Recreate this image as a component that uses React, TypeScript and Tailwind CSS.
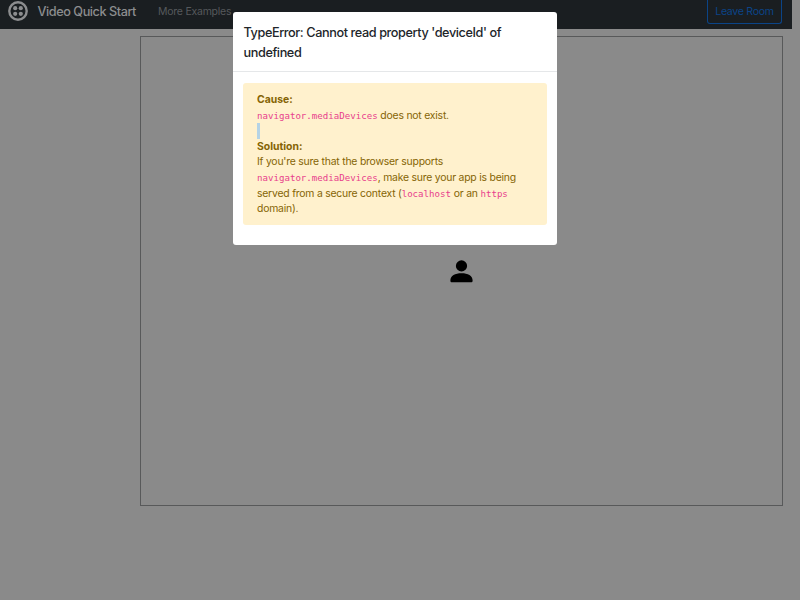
import type { ReactNode } from "react";

function Code({ children }: { children: ReactNode }) {
  return (
    <code className="font-['DejaVu_Sans_Mono',monospace] text-[9.12px] leading-none tracking-normal text-[#e83e8c]">
      {children}
    </code>
  );
}

function Logo() {
  return (
    <svg className="h-5 w-5 shrink-0" viewBox="0 0 20 20" fill="#8c8d8f">
      <circle cx="10" cy="10" r="8.7" fill="none" stroke="#8c8d8f" strokeWidth="2.4" />
      <circle cx="7.2" cy="7.2" r="2.1" />
      <circle cx="12.8" cy="7.2" r="2.1" />
      <circle cx="7.2" cy="12.8" r="2.1" />
      <circle cx="12.8" cy="12.8" r="2.1" />
    </svg>
  );
}

function Navbar() {
  return (
    <nav className="flex h-[29px] w-[792px] items-start bg-[#1a1e21] pr-2.5 pl-2">
      <div className="mt-px flex h-5 items-center">
        <Logo />
        <span className="ml-[9.5px] w-[99px] pt-0.5 text-[12.7px] leading-5 font-medium tracking-[-0.45px] whitespace-nowrap text-[#8c8d8f]">
          Video Quick Start
        </span>
        <span className="ml-[21.5px] pt-0.5 text-[10.5px] leading-5 tracking-[-0.24px] whitespace-nowrap text-[#56595c]">
          More Examples
        </span>
      </div>
      <button className="ml-auto h-6 w-[75px] rounded-b-[3px] border border-t-0 border-[#0b4487] text-[10.6px] leading-[23px] tracking-[-0.3px] whitespace-nowrap text-[#0b4487]">
        Leave Room
      </button>
    </nav>
  );
}

function ErrorDialog() {
  return (
    <div
      role="dialog"
      className="absolute top-3 left-[233px] h-[233px] w-[324px] rounded-[3px] bg-white"
    >
      <h5 className="h-[60px] border-b border-[#e5e7e9] pt-[11px] pl-[10.5px] text-[12.7px] leading-[19.5px] font-medium tracking-[-0.41px] whitespace-nowrap text-[#212529]">
        TypeError: Cannot read property 'deviceId' of
        <br />
        undefined
      </h5>
      <div className="mx-2.5 mt-[11px] h-[141.5px] rounded-[3px] bg-[#fff1cd] pt-[9px] pl-3.5 text-[10.4px] leading-[15.6px] tracking-[-0.21px] whitespace-nowrap text-[#856404]">
        <div className="font-bold tracking-normal">Cause:</div>
        <div>
          <Code>navigator.mediaDevices</Code> does not exist.
        </div>
        <div className="h-[15.6px] w-[3px] bg-[#b5d3e5]" />
        <div className="font-bold tracking-normal">Solution:</div>
        <div>If you're sure that the browser supports</div>
        <div>
          <Code>navigator.mediaDevices</Code>, make sure your app is being
        </div>
        <div>
          served from a secure context (<Code>localhost</Code> or an <Code>https</Code>
        </div>
        <div>domain).</div>
      </div>
    </div>
  );
}

export default function App() {
  return (
    <div className="relative h-[600px] w-[800px] overflow-hidden bg-[#8a8a8a] font-[Inter,sans-serif]">
      <Navbar />
      <main className="mt-[7px] ml-[140px] h-[470px] w-[643px] border border-[#58595a] pt-[223px] pl-[309px]">
        <svg className="h-[23px] w-[23px]" viewBox="0 0 23 23" fill="#000">
          <circle cx="11.5" cy="5.9" r="5.6" />
          <path d="M.4 20.2C.4 15.6 5.1 13.2 11.5 13.2s11.1 2.4 11.1 7v.6c0 1-.6 1.5-1.6 1.5H2c-1 0-1.6-.5-1.6-1.5z" />
        </svg>
      </main>
      <ErrorDialog />
    </div>
  );
}
